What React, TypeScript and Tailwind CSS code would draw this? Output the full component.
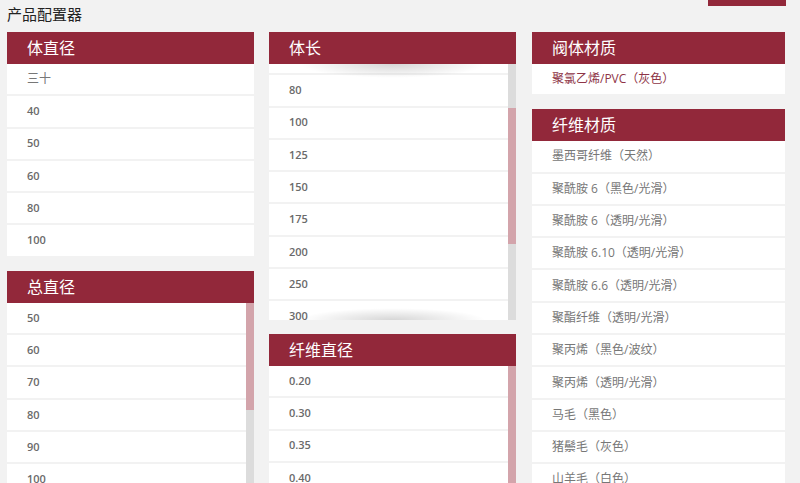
import React from 'react'

const font = 'font-["Open_Sans","Noto_Sans_CJK_SC",sans-serif]'

function Header({ title }: { title: string }) {
  return (
    <div className="flex h-[32px] items-center bg-[#92283a] pl-[20px] text-[16px] text-white">
      {title}
    </div>
  )
}

function Row({ label, red }: { label: string; red?: boolean }) {
  const isNum = /^[0-9.]+$/.test(label)
  const tone = red ? 'text-[12px] text-[#8e3446]' : isNum ? 'text-[11px] font-semibold text-[#6a6a6a]' : 'text-[12px] text-[#777]'
  return (
    <div className={`mb-[2px] flex h-[30.3px] shrink-0 items-center bg-white pl-[20px] ${tone}`}>
      {label}
    </div>
  )
}

function Scrollbar({ top, thumb }: { top: number; thumb: number }) {
  return (
    <div className="relative w-[8px] shrink-0 bg-[#dcdcdc]">
      <div className="absolute left-0 right-0 bg-[#d3a4ab]" style={{ top, height: thumb }} />
    </div>
  )
}

function ScrollPanel({
  title,
  items,
  offset,
  thumbTop,
  thumbH,
  shadows,
}: {
  title: string
  items: string[]
  offset: number
  thumbTop: number
  thumbH: number
  shadows?: boolean
}) {
  return (
    <div>
      <Header title={title} />
      <div className="relative flex h-[256px]">
        <div className="flex-1 overflow-hidden">
          <div className="flex flex-col" style={{ marginTop: -offset }}>
            {items.map((i) => (
              <Row key={i} label={i} />
            ))}
          </div>
        </div>
        <Scrollbar top={thumbTop} thumb={thumbH} />
        {shadows && (
          <>
            <div className="pointer-events-none absolute left-[30px] right-[30px] top-0 h-[14px] bg-[radial-gradient(ellipse_at_top,rgba(0,0,0,0.16),transparent_70%)]" />
            <div className="pointer-events-none absolute bottom-0 left-[30px] right-[30px] h-[12px] bg-[radial-gradient(ellipse_at_bottom,rgba(0,0,0,0.16),transparent_70%)]" />
          </>
        )}
      </div>
    </div>
  )
}

export default function App() {
  return (
    <div className={`h-[483px] w-[800px] overflow-hidden bg-[#f2f2f2] px-[7px] ${font}`}>
      <div className="flex h-[32px] w-[779px] items-start justify-between">
        <div className="pt-[3px] text-[15px] leading-[22px] text-[#222]">产品配置器</div>
        <div className="h-[6px] w-[78px] bg-[#92283a]" />
      </div>
      <div className="grid grid-cols-[247px_247px_254px] gap-x-[15px]">
        <div className="flex flex-col">
          <div>
            <Header title="体直径" />
            <div className="flex flex-col">
              {['三十', '40', '50', '60', '80', '100'].map((i) => (
                <Row key={i} label={i} />
              ))}
            </div>
          </div>
          <div className="mt-[13px]">
            <ScrollPanel
              title="总直径"
              items={['50', '60', '70', '80', '90', '100', '110', '120', '130']}
              offset={0}
              thumbTop={0}
              thumbH={107}
            />
          </div>
        </div>
        <div className="flex flex-col">
          <ScrollPanel
            title="体长"
            items={['70', '80', '100', '125', '150', '175', '200', '250', '300', '350']}
            offset={21}
            thumbTop={44}
            thumbH={136}
            shadows
          />
          <div className="mt-[14px]">
            <ScrollPanel
              title="纤维直径"
              items={['0.20', '0.30', '0.35', '0.40', '0.45', '0.50', '0.60', '0.70', '0.80']}
              offset={0}
              thumbTop={0}
              thumbH={140}
            />
          </div>
        </div>
        <div className="ml-[1px] flex flex-col">
          <div>
            <Header title="阀体材质" />
            <Row label="聚氯乙烯/PVC（灰色）" red />
          </div>
          <div className="mt-[13px]">
            <Header title="纤维材质" />
            <div className="flex flex-col">
              {[
                '墨西哥纤维（天然）',
                '聚酰胺 6（黑色/光滑）',
                '聚酰胺 6（透明/光滑）',
                '聚酰胺 6.10（透明/光滑）',
                '聚酰胺 6.6（透明/光滑）',
                '聚酯纤维（透明/光滑）',
                '聚丙烯（黑色/波纹）',
                '聚丙烯（透明/光滑）',
                '马毛（黑色）',
                '猪鬃毛（灰色）',
                '山羊毛（白色）',
              ].map((i) => (
                <Row key={i} label={i} />
              ))}
            </div>
          </div>
        </div>
      </div>
    </div>
  )
}
